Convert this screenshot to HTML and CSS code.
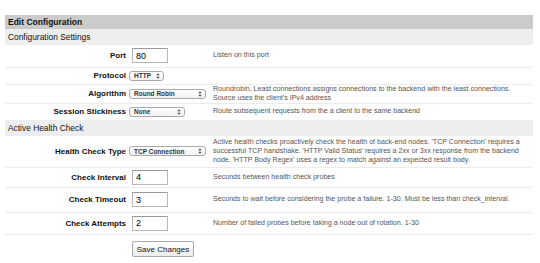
FILE: index.html
```html
<!DOCTYPE html>
<html lang="en">
<head>
  <meta charset="UTF-8">
  <title>Edit Configuration</title>
  <link rel="stylesheet" href="styles.css">
</head>
<body>
  <form class="config">
    <div class="title">Edit Configuration</div>
    <table class="settings">
      <tr class="section"><td colspan="3">Configuration Settings</td></tr>
      <tr class="h22">
        <th>Port</th>
        <td><input class="text" type="text" value="80"></td>
        <td class="help">Listen on this port</td>
      </tr>
      <tr class="h17">
        <th>Protocol</th>
        <td><span class="select w-proto">HTTP<svg viewBox="0 0 6 9"><path d="M3 0.5 L5.5 3.5 H0.5 Z M3 8.5 L5.5 5.5 H0.5 Z"/></svg></span></td>
        <td class="help"></td>
      </tr>
      <tr class="h19">
        <th>Algorithm</th>
        <td><span class="select w-algo">Round Robin<svg viewBox="0 0 6 9"><path d="M3 0.5 L5.5 3.5 H0.5 Z M3 8.5 L5.5 5.5 H0.5 Z"/></svg></span></td>
        <td class="help">Roundrobin. Least connections assigns connections to the backend with the least connections.<br>Source uses the client's IPv4 address</td>
      </tr>
      <tr class="h17">
        <th>Session Stickiness</th>
        <td><span class="select w-sticky">None<svg viewBox="0 0 6 9"><path d="M3 0.5 L5.5 3.5 H0.5 Z M3 8.5 L5.5 5.5 H0.5 Z"/></svg></span></td>
        <td class="help">Route subsequent requests from the a client to the same backend</td>
      </tr>
      <tr class="section"><td colspan="3">Active Health Check</td></tr>
      <tr class="h31">
        <th>Health Check Type</th>
        <td><span class="select w-algo">TCP Connection<svg viewBox="0 0 6 9"><path d="M3 0.5 L5.5 3.5 H0.5 Z M3 8.5 L5.5 5.5 H0.5 Z"/></svg></span></td>
        <td class="help">Active health checks proactively check the health of back-end nodes. 'TCP Connection' requires a successful TCP handshake. 'HTTP Valid Status' requires a 2xx or 3xx response from the backend node. 'HTTP Body Regex' uses a regex to match against an expected result body.</td>
      </tr>
      <tr class="h20">
        <th>Check Interval</th>
        <td><input class="text" type="text" value="4"></td>
        <td class="help">Seconds between health check probes</td>
      </tr>
      <tr class="h25">
        <th>Check Timeout</th>
        <td><input class="text" type="text" value="3"></td>
        <td class="help">Seconds to wait before considering the probe a failure. 1-30. Must be less than check_interval.</td>
      </tr>
      <tr class="h22">
        <th>Check Attempts</th>
        <td><input class="text" type="text" value="2"></td>
        <td class="help">Number of failed probes before taking a node out of rotation. 1-30</td>
      </tr>
      <tr class="actions">
        <th></th>
        <td colspan="2"><button type="button" class="save">Save Changes</button></td>
      </tr>
    </table>
  </form>
</body>
</html>
```

FILE: styles.css
```css
* {
  box-sizing: border-box;
}

body {
  margin: 15px 7px 0 5px;
  font-family: 'Liberation Sans', Arial, sans-serif;
  color: #111;
  background: #fff;
}

.title {
  background: #cbcbcb;
  font-size: 8.5px;
  font-weight: bold;
  height: 14px;
  line-height: 14px;
  padding-left: 3px;
}

.settings {
  width: 100%;
  border-collapse: collapse;
}

.settings th {
  width: 124px;
  text-align: right;
  font-size: 8px;
  font-weight: bold;
  padding: 0 3px 0 0;
  vertical-align: middle;
  white-space: nowrap;
}

.settings td {
  padding: 0;
  vertical-align: middle;
}

.settings tr {
  border-bottom: 1px solid #ececec;
}

.settings td:nth-child(2) {
  width: 82px;
}

.settings tr.section {
  border-bottom: none;
}

.section td {
  background: #eeeeee;
  font-size: 8.4px;
  height: 16px;
  padding-left: 3px;
}

.settings tr.h17 { height: 17px; }
.settings tr.h19 { height: 19px; }
.settings tr.h20 { height: 20px; }
.settings tr.h22 { height: 22px; }
.settings tr.h25 { height: 25px; }
.settings tr.h31 { height: 31px; }

.help {
  font-size: 7.1px;
  color: #555;
  line-height: 9px;
  padding: 0 6px 0 2px !important;
}

.text {
  width: 36px;
  height: 15px;
  margin-left: 3px;
  border: 1px solid #b8b8b8;
  border-top-color: #999;
  font-family: inherit;
  font-size: 9px;
  padding: 0 3px;
  display: block;
}

.select {
  display: flex;
  align-items: center;
  justify-content: space-between;
  height: 10px;
  border: 1px solid #aaa;
  border-radius: 3px;
  background: linear-gradient(#fff, #f2f2f2);
  font-size: 6.5px;
  font-weight: bold;
  color: #333;
  padding: 0 3px 0 4px;
}

.select svg {
  width: 4px;
  height: 6px;
  fill: #444;
}

.w-proto {
  width: 35px;
}

.w-algo {
  width: 77px;
}

.w-sticky {
  width: 56px;
}

.settings tr.actions {
  border-bottom: none;
  height: 26px;
}

.save {
  font-family: inherit;
  font-size: 8px;
  height: 16px;
  width: 62px;
  padding: 0;
  margin: 2px 0 0 3px;
  white-space: nowrap;
  background: linear-gradient(#fff, #ececec);
  border: 1px solid #aaa;
  border-radius: 2px;
  color: #111;
}
```
